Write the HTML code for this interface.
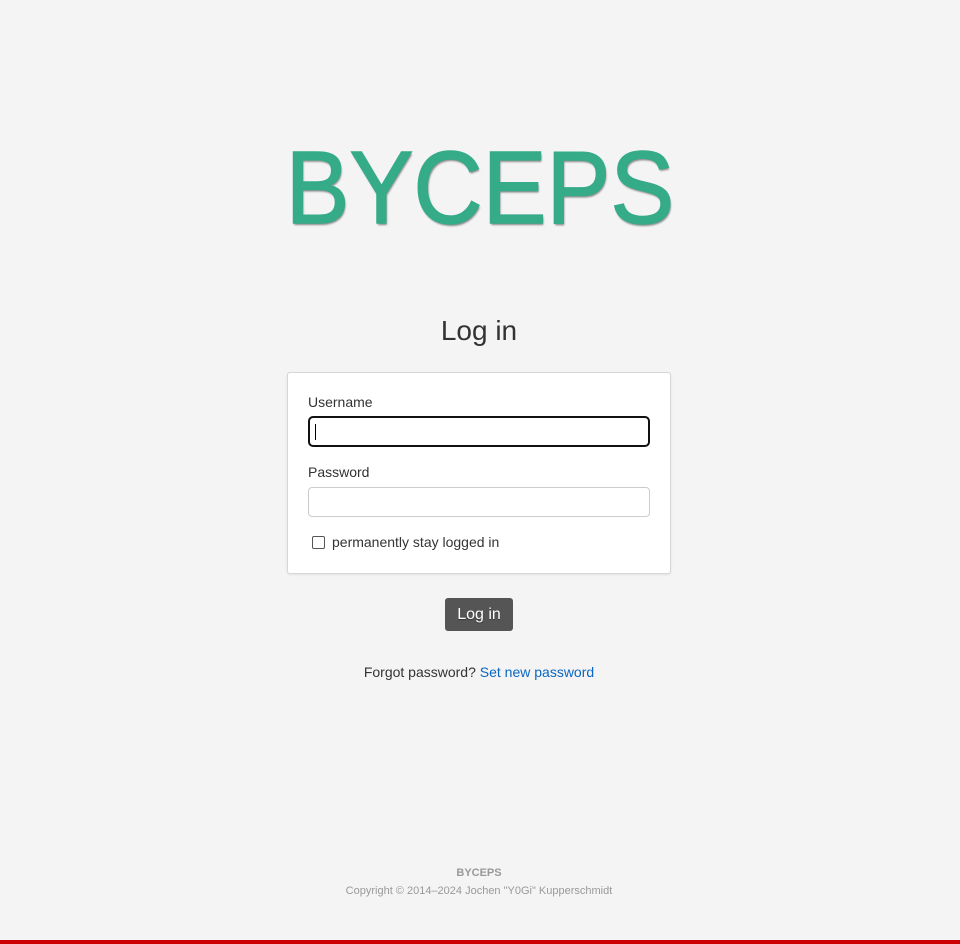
<!DOCTYPE html>
<html><head><meta charset="utf-8"><style>
html,body{margin:0;padding:0}
body{width:960px;height:944px;background:#f4f4f4;font-family:"Liberation Sans",sans-serif;color:#333;position:relative;overflow:hidden}
.a{position:absolute}
.logo{left:0;width:960px;top:128px;text-align:center;font-size:103px;line-height:120px;color:#35ab88;text-shadow:1px 2px 2px rgba(0,0,0,.45);-webkit-text-stroke:1.5px #35ab88}
.logo span{display:inline-block;transform:scaleX(0.93)}
h1{position:absolute;margin:0;left:0;width:958px;top:314px;text-align:center;font-size:28px;font-weight:normal;line-height:34px;color:#333}
.box{left:287px;top:372px;width:382px;height:200px;background:#fff;border:1px solid #d6d6d6;border-radius:3px;box-shadow:0 1px 2px rgba(0,0,0,.08)}
.lbl{font-size:14px;color:#333}
.inp{left:308px;width:340px;height:28px;background:#fff;border:1px solid #ccc;border-radius:4px}
.btn{left:445px;top:598px;width:68px;height:33px;background:#555;border-radius:3px;color:#fff;font-size:16px;line-height:33px;text-align:center;text-shadow:0 1px 1px rgba(0,0,0,.4)}
</style></head><body>
<div class="a logo"><span>BYCEPS</span></div>
<h1>Log in</h1>
<div class="a box"></div>
<div class="a lbl" style="left:308px;top:394px">Username</div>
<div class="a inp" style="top:416px;height:27px;border:2px solid #111;width:338px;border-radius:5px"></div>
<div class="a" style="left:315px;top:424px;width:1px;height:16px;background:#000"></div>
<div class="a lbl" style="left:308px;top:464px">Password</div>
<div class="a inp" style="top:487px"></div>
<div class="a" style="left:312px;top:536px;width:11px;height:11px;border:1px solid #555;border-radius:2px;background:#fff"></div>
<div class="a lbl" style="left:332px;top:534px">permanently stay logged in</div>
<div class="a btn">Log in</div>
<div class="a" style="left:0;width:958px;top:664px;text-align:center;font-size:14px">Forgot password? <span style="color:#0a66c2">Set new password</span></div>
<div class="a" style="left:0;width:958px;top:867px;text-align:center;font-size:11px;font-weight:bold;color:#999">BYCEPS</div>
<div class="a" style="left:0;width:958px;top:885px;text-align:center;font-size:11px;color:#999">Copyright © 2014–2024 Jochen "Y0Gi" Kupperschmidt</div>
<div class="a" style="left:0;top:940px;width:960px;height:4px;background:#c00"></div>
</body></html>
